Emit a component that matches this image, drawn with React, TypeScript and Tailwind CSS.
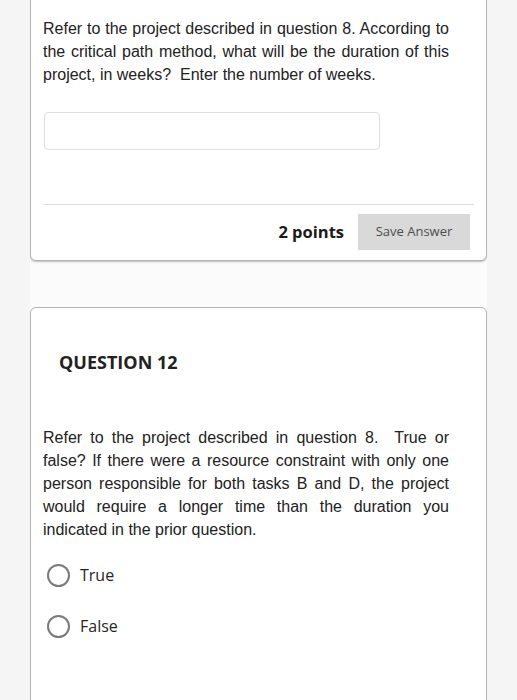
const Radio = ({ label }: { label: string }) => (
  <label className="flex items-center h-[30px]">
    <span className="ml-[4px] w-[23px] h-[23px] rounded-full border-[2px] border-[#7a7a7a] bg-white" />
    <span className="ml-[10px] text-[16px] text-[#262626] font-['Open_Sans',sans-serif]">
      {label}
    </span>
  </label>
);

const App = () => {
  return (
    <div className="min-h-screen bg-[#f5f5f5] font-['Liberation_Sans',Arial,sans-serif]">
      <div className="mx-[30px] w-[457px] min-h-[700px] bg-[#fbfbfb] overflow-hidden">
        {/* question 11 (top cut off) */}
        <div className="-mt-[10px] bg-white border border-[#b3b3b3] rounded-[6px] shadow-[0_1px_2px_rgba(0,0,0,0.25)] pt-[26px] pb-[10px] pl-[12px] pr-[12px]">
          <p className="w-[406px] text-[16px] leading-[23px] text-[#222] text-justify">
            Refer to the project described in question 8. According to the
            critical path method, what will be the duration of this project,
            in weeks?&nbsp; Enter the number of weeks.
          </p>
          <input
            type="text"
            className="block mt-[26px] ml-[1px] w-[336px] h-[38px] rounded-[4px] border border-[#dedede] bg-white outline-none"
          />
          <div className="mt-[54px] h-[1px] bg-[#dcdcdc]" />
          <div className="mt-[9px] flex items-center justify-end gap-[14px] pr-[4px] font-['Open_Sans',sans-serif]">
            <span className="text-[16.5px] font-bold text-[#1a1a1a]">
              2 points
            </span>
            <button className="w-[112px] h-[36px] bg-[#d9d9d9] text-[13px] text-[#4d4d4d]">
              Save Answer
            </button>
          </div>
        </div>

        {/* question 12 */}
        <div className="mt-[46px] bg-white border border-[#b3b3b3] rounded-[6px] pt-[42px] pl-[12px] pr-[12px] pb-[80px]">
          <h2 className="pl-[16px] text-[18px] leading-[24px] font-bold text-[#222] font-['Open_Sans',sans-serif]">
            QUESTION 12
          </h2>
          <p className="mt-[52px] w-[406px] text-[16px] leading-[23px] text-[#222] text-justify">
            Refer to the project described in question 8.&nbsp; True or false?
            If there were a resource constraint with only one person
            responsible for both tasks B and D, the project would require a
            longer time than the duration you indicated in the prior question.
          </p>
          <div className="mt-[19px] flex flex-col gap-[21px]">
            <Radio label="True" />
            <Radio label="False" />
          </div>
        </div>
      </div>
    </div>
  );
};

export default App;
